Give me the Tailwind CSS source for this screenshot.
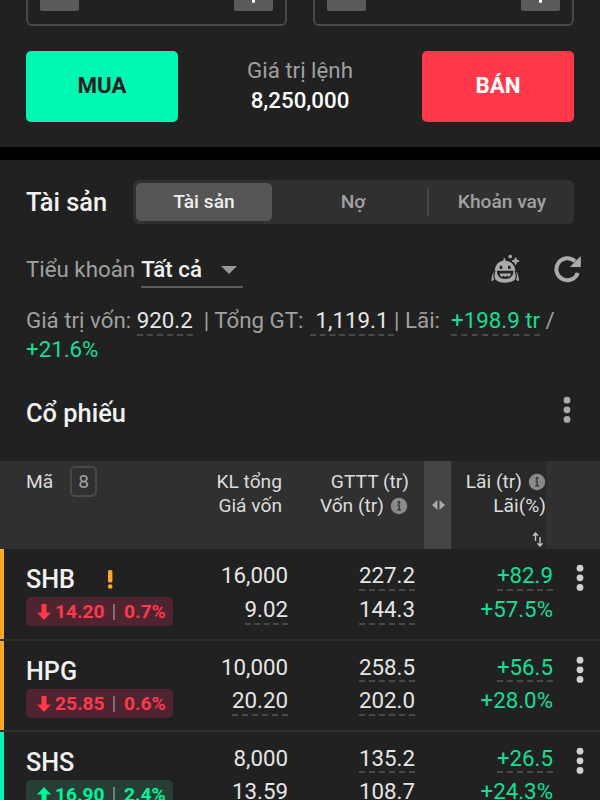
<!DOCTYPE html>
<html lang="vi">
  <head>
    <meta charset="UTF-8" />
    <meta name="viewport" content="width=device-width, initial-scale=1.0" />
    <title>Tài sản</title>
    <script src="https://cdn.jsdelivr.net/npm/@tailwindcss/browser@4"></script>
  </head>

  <body class="h-[800px] w-[600px] overflow-hidden bg-[#212121] font-['Roboto',sans-serif] text-[22.3px] text-[#e6e6e6]">
    <svg class="hidden">
      <symbol id="dots" viewBox="0 0 8 28">
        <circle cx="4" cy="4.2" r="3.4" />
        <circle cx="4" cy="13.8" r="3.4" />
        <circle cx="4" cy="23.4" r="3.4" />
      </symbol>
      <symbol id="info" viewBox="0 0 18 18">
        <circle cx="9" cy="9" r="8.2" fill="#8a8a8a" />
        <circle cx="9" cy="5.4" r="1.3" fill="#303030" />
        <path d="M7.4 8.2h1.8v4.5M7.2 12.9h4" fill="none" stroke="#303030" stroke-width="1.3" />
      </symbol>
      <symbol id="down" viewBox="0 0 14 18">
        <path d="M4.5 1h5v8.5H14L7 17 0 9.5h4.5z" />
      </symbol>
      <symbol id="up" viewBox="0 0 14 18">
        <path d="M4.5 17h5V8.5H14L7 1 0 8.5h4.5z" />
      </symbol>
    </svg>

    <!-- Order form -->
    <section class="h-[147px] px-[26px]">
      <div class="flex h-[26px] justify-between">
        <div class="flex w-[261px] justify-between rounded-b-md border-2 border-t-0 border-[#484848] px-3">
          <div class="h-[11px] w-[39px] rounded-b-xs bg-[#5a5a5a]"></div>
          <div class="flex h-[11px] w-[39px] justify-center rounded-b-xs bg-[#5a5a5a]">
            <div class="h-[3px] w-[3px] rounded-b-full bg-white"></div>
          </div>
        </div>
        <div class="flex w-[261px] justify-between rounded-b-md border-2 border-t-0 border-[#484848] px-3">
          <div class="h-[11px] w-[39px] rounded-b-xs bg-[#5a5a5a]"></div>
          <div class="flex h-[11px] w-[39px] justify-center rounded-b-xs bg-[#5a5a5a]">
            <div class="h-[3px] w-[3px] rounded-b-full bg-white"></div>
          </div>
        </div>
      </div>
      <div class="mt-[25px] flex h-[71px] justify-between">
        <button class="w-[152px] rounded-[5px] bg-[#00f8b3] pb-0.5 font-bold text-[#212121]">MUA</button>
        <div class="pt-1 text-center leading-[30px]">
          <p class="text-[#a0a0a0]">Giá trị lệnh</p>
          <p class="font-medium text-white">8,250,000</p>
        </div>
        <button class="w-[152px] rounded-[5px] bg-[#ff384a] pb-0.5 font-bold text-white">BÁN</button>
      </div>
    </section>

    <div class="h-[13px] bg-black"></div>

    <!-- Assets -->
    <section class="h-[301px] px-[26px] pt-5">
      <div class="flex h-11 items-center justify-between">
        <h1 class="text-[25.4px] font-medium text-[#f2f2f2]">Tài sản</h1>
        <div class="flex h-11 w-[441px] items-center rounded-[5px] bg-[#303030] p-[3px] text-[19.2px] font-medium text-[#a0a0a0]">
          <div class="flex h-[38px] w-[136px] items-center justify-center rounded-[5px] bg-[#555555] text-[#f0f0f0]">Tài sản</div>
          <div class="w-[155px] pl-[7px] text-center">Nợ</div>
          <div class="h-7 w-0.5 bg-[#454545]"></div>
          <div class="flex-1 pl-1 text-center">Khoản vay</div>
        </div>
      </div>

      <div class="mt-[26px] flex h-[38px] items-center">
        <span class="pt-px text-[#a0a0a0]">Tiểu khoản</span>
        <div class="ml-[6px] flex h-[37px] w-[102px] items-center self-end border-b-2 border-[#5c5c5c] pt-[3px]">
          <span class="font-medium text-[#f2f2f2]">Tất cả</span>
          <svg class="ml-[19px] h-2 w-4" viewBox="0 0 16 8"><path d="M0 0h16L8 8z" fill="#999" /></svg>
        </div>
        <svg class="-mt-px ml-auto h-8 w-8" viewBox="0 0 32 32">
          <path d="M13.6 4.500c1.300.7 1.800 1.700 1.900 3.200 6 .6 9.300 4.400 9.900 9.800 2.400 2.200 3.400 5.700 3.600 10.500-2-.4-2.800-1-3.300-2.300-2.300 2.700-5.900 4-10.600 4s-8.100-1.300-10.400-4c-.5 1.300-1.400 1.900-3.300 2.300.2-4.800 1.200-8.300 3.500-10.500.5-5.500 3.300-8.900 8.200-9.700.5-1 .7-1.900.5-3.300z" fill="#aaa" />
          <path d="M4.600 26.500c-1.100-3-.7-6.200.5-8.700M25.600 26.500c1.100-3 .7-6.200-.5-8.700" fill="none" stroke="#212121" stroke-width="1.2" />
          <path d="M7 17.800h16.400c.2 5-3 8.200-8.200 8.200S6.800 22.800 7 17.800z" fill="#252525" />
          <path d="M10 20.600h10.600v1.800l-1.800 1.300-1.700-.9-1.800 1-1.800-1-1.700.9-1.800-1.300z" fill="#aaa" />
          <path d="M11 12.700v3.200M19.300 12.700v3.200" stroke="#252525" stroke-width="2.6" />
          <path d="M25.600 4.500l1 2.600 2.600 1-2.600 1-1 2.600-1-2.600-2.600-1 2.600-1z" fill="#aaa" stroke="#aaa" />
          <circle cx="20.200" cy="3.600" r="1.800" fill="#aaa" />
        </svg>
        <svg class="-mr-2 mb-px ml-8 h-8 w-[28px]" viewBox="0 0 28 32">
          <path d="M23.8 19.8A11 11 0 1 1 21 8.300" fill="none" stroke="#aaa" stroke-width="4" />
          <path d="M26.800 3v11h-11z" fill="#aaa" />
        </svg>
      </div>

      <div class="mt-[18px] leading-[28.5px] text-[#a0a0a0]">
        <div class="flex whitespace-pre"><span>Giá trị vốn: </span><span class="h-[30px] border-b-2 border-dashed border-[#484848] text-[#e6e6e6]">920.2</span><span>  | Tổng GT: </span><span class="ml-px h-[30px] border-b-2 border-dashed border-[#484848] text-[#e6e6e6]"> 1,119.1 </span><span>| Lãi:  </span><span class="h-[30px] border-b-2 border-dashed border-[#484848] text-[#13df95]">+198.9 tr</span><span> /</span></div>
        <div class="-mt-[1.5px] text-[#13df95]">+21.6%</div>
      </div>

      <div class="mt-[32px] flex items-center justify-between">
        <h2 class="text-[25.4px] leading-9 font-medium text-[#f2f2f2]">Cổ phiếu</h2>
        <svg class="mr-[3px] mb-1.5 h-7 w-2" fill="#aaa"><use href="#dots" /></svg>
      </div>
    </section>

    <!-- Stock table -->
    <section>
      <div class="flex h-[88px] bg-[#303030] text-[19.2px] leading-6 text-[#dcdcdc]">
        <div class="flex w-[150px] pt-[5px] pl-[26px]">
          <span class="mt-1">Mã</span>
          <span class="ml-[17px] flex h-[31px] w-[27px] items-center justify-center rounded-[5px] border-2 border-[#494949] text-[#a0a0a0]">8</span>
        </div>
        <div class="w-[132px] pt-[9px] text-right">
          <p>KL tổng</p>
          <p>Giá vốn</p>
        </div>
        <div class="w-[127px] pt-[9px] text-right">
          <p>GTTT (tr)</p>
          <p class="flex items-center justify-end">Vốn (tr)<svg class="mr-px ml-[6px] h-[18px] w-[18px]"><use href="#info" /></svg></p>
        </div>
        <div class="ml-[15px] flex w-[27px] justify-center bg-[#454545] pt-[39px] pl-px">
          <svg class="h-[10px] w-[13px]" viewBox="0 0 13 10" fill="#aaa"><path d="M5.5 0v10L0 5zM7.5 0v10L13 5z" /></svg>
        </div>
        <div class="w-[95px] bg-[#292929] pt-[9px] text-right">
          <p class="flex items-center justify-end">Lãi (tr)<svg class="ml-[6px] h-[18px] w-[18px]"><use href="#info" /></svg></p>
          <p>Lãi(%)</p>
          <svg class="mt-[14px] mr-[3px] ml-auto h-[15px] w-[11px]" viewBox="0 0 11 15" fill="none" stroke="#c4c4c4" stroke-width="1.4">
            <path d="M3.500 9V1M1 3.800L3.500 1 6 3.800M8 5v9M5.500 11.300L8 14l2.500-2.700" />
          </svg>
        </div>
      </div>

      <!-- SHB -->
      <div class="flex h-[92px] border-b-2 border-[#2e2e2e]">
        <div class="w-1 bg-[#ffa726]"></div>
        <div class="w-[169px] pt-[14px] pl-[22px]">
          <div class="flex h-[34px] items-center text-[25.2px] font-medium text-[#f2f2f2]">
            SHB
            <svg class="mb-0.5 ml-8 h-[19px] w-[6px]" viewBox="0 0 6 19" fill="#ffa726"><rect x="1" width="4.4" height="12.5" rx="1.5" /><circle cx="3.2" cy="16.5" r="2.3" /></svg>
          </div>
          <div class="flex h-[29px] items-center rounded-[5px] bg-[#4f2431] pl-[11px] text-[19.2px] font-bold text-[#ff384a]">
            <svg class="h-[18px] w-[14px]" fill="#ff384a"><use href="#down" /></svg>
            <span class="ml-1 w-[50px] pt-px">14.20</span>
            <span class="mr-[9px] ml-2 h-4 w-0.5 bg-[#8c6870]"></span>
            <span class="pt-px">0.7%</span>
          </div>
        </div>
        <div class="flex w-[115px] flex-col items-end pt-[11px] leading-8">
          <span class="-mt-px h-8">16,000</span>
          <span class="mt-[2px] h-[32px] border-b-2 border-dashed border-[#484848]">9.02</span>
        </div>
        <div class="flex w-[127px] flex-col items-end pt-[11px] leading-8">
          <span class="-mt-px h-8 border-b-2 border-dashed border-[#484848]">227.2</span>
          <span class="mt-[2px] h-[32px] border-b-2 border-dashed border-[#484848]">144.3</span>
        </div>
        <div class="flex w-[138px] flex-col items-end pt-[11px] leading-8 text-[#13df95]">
          <span class="-mt-px h-8 border-b-2 border-dashed border-[#484848]">+82.9</span>
          <span class="mt-[2px]">+57.5%</span>
        </div>
        <svg class="mt-[15px] ml-[23px] h-7 w-2" fill="#d0d0d0"><use href="#dots" /></svg>
      </div>

      <!-- HPG -->
      <div class="flex h-[91px] border-b-2 border-[#2e2e2e]">
        <div class="w-1 bg-[#ffa726]"></div>
        <div class="w-[169px] pt-[13px] pl-[22px]">
          <div class="flex h-[35px] items-center text-[25.2px] font-medium text-[#f2f2f2]">HPG</div>
          <div class="flex h-[29px] items-center rounded-[5px] bg-[#4f2431] pl-[11px] text-[19.2px] font-bold text-[#ff384a]">
            <svg class="h-[18px] w-[14px]" fill="#ff384a"><use href="#down" /></svg>
            <span class="ml-1 w-[50px] pt-px">25.85</span>
            <span class="mr-[9px] ml-2 h-4 w-0.5 bg-[#8c6870]"></span>
            <span class="pt-px">0.6%</span>
          </div>
        </div>
        <div class="flex w-[115px] flex-col items-end pt-[10px] leading-8">
          <span class="h-[31px]">10,000</span>
          <span class="mt-[2px] h-[32px] border-b-2 border-dashed border-[#484848]">20.20</span>
        </div>
        <div class="flex w-[127px] flex-col items-end pt-[10px] leading-8">
          <span class="h-[31px] border-b-2 border-dashed border-[#484848]">258.5</span>
          <span class="mt-[2px] h-[32px] border-b-2 border-dashed border-[#484848]">202.0</span>
        </div>
        <div class="flex w-[138px] flex-col items-end pt-[10px] leading-8 text-[#13df95]">
          <span class="h-[31px] border-b-2 border-dashed border-[#484848]">+56.5</span>
          <span class="mt-[2px]">+28.0%</span>
        </div>
        <svg class="mt-[15px] ml-[23px] h-7 w-2" fill="#d0d0d0"><use href="#dots" /></svg>
      </div>

      <!-- SHS -->
      <div class="flex h-[91px]">
        <div class="w-1 bg-[#00f8b3]"></div>
        <div class="w-[169px] pt-[13px] pl-[22px]">
          <div class="flex h-[35px] items-center text-[25.2px] font-medium text-[#f2f2f2]">SHS</div>
          <div class="flex h-[29px] items-center rounded-[5px] bg-[#273e36] pl-[11px] text-[19.2px] font-bold text-[#00f59b]">
            <svg class="h-[18px] w-[14px]" fill="#00f59b"><use href="#up" /></svg>
            <span class="ml-1 w-[50px] pt-px">16.90</span>
            <span class="mr-[9px] ml-2 h-4 w-0.5 bg-[#6f837c]"></span>
            <span class="pt-px">2.4%</span>
          </div>
        </div>
        <div class="flex w-[115px] flex-col items-end pt-[10px] leading-8">
          <span class="h-[31px]">8,000</span>
          <span class="mt-[2px] h-[32px] border-b-2 border-dashed border-[#484848]">13.59</span>
        </div>
        <div class="flex w-[127px] flex-col items-end pt-[10px] leading-8">
          <span class="h-[31px] border-b-2 border-dashed border-[#484848]">135.2</span>
          <span class="mt-[2px] h-[32px] border-b-2 border-dashed border-[#484848]">108.7</span>
        </div>
        <div class="flex w-[138px] flex-col items-end pt-[10px] leading-8 text-[#13df95]">
          <span class="h-[31px] border-b-2 border-dashed border-[#484848]">+26.5</span>
          <span class="mt-[2px]">+24.3%</span>
        </div>
        <svg class="mt-[15px] ml-[23px] h-7 w-2" fill="#d0d0d0"><use href="#dots" /></svg>
      </div>
    </section>
  </body>
</html>
